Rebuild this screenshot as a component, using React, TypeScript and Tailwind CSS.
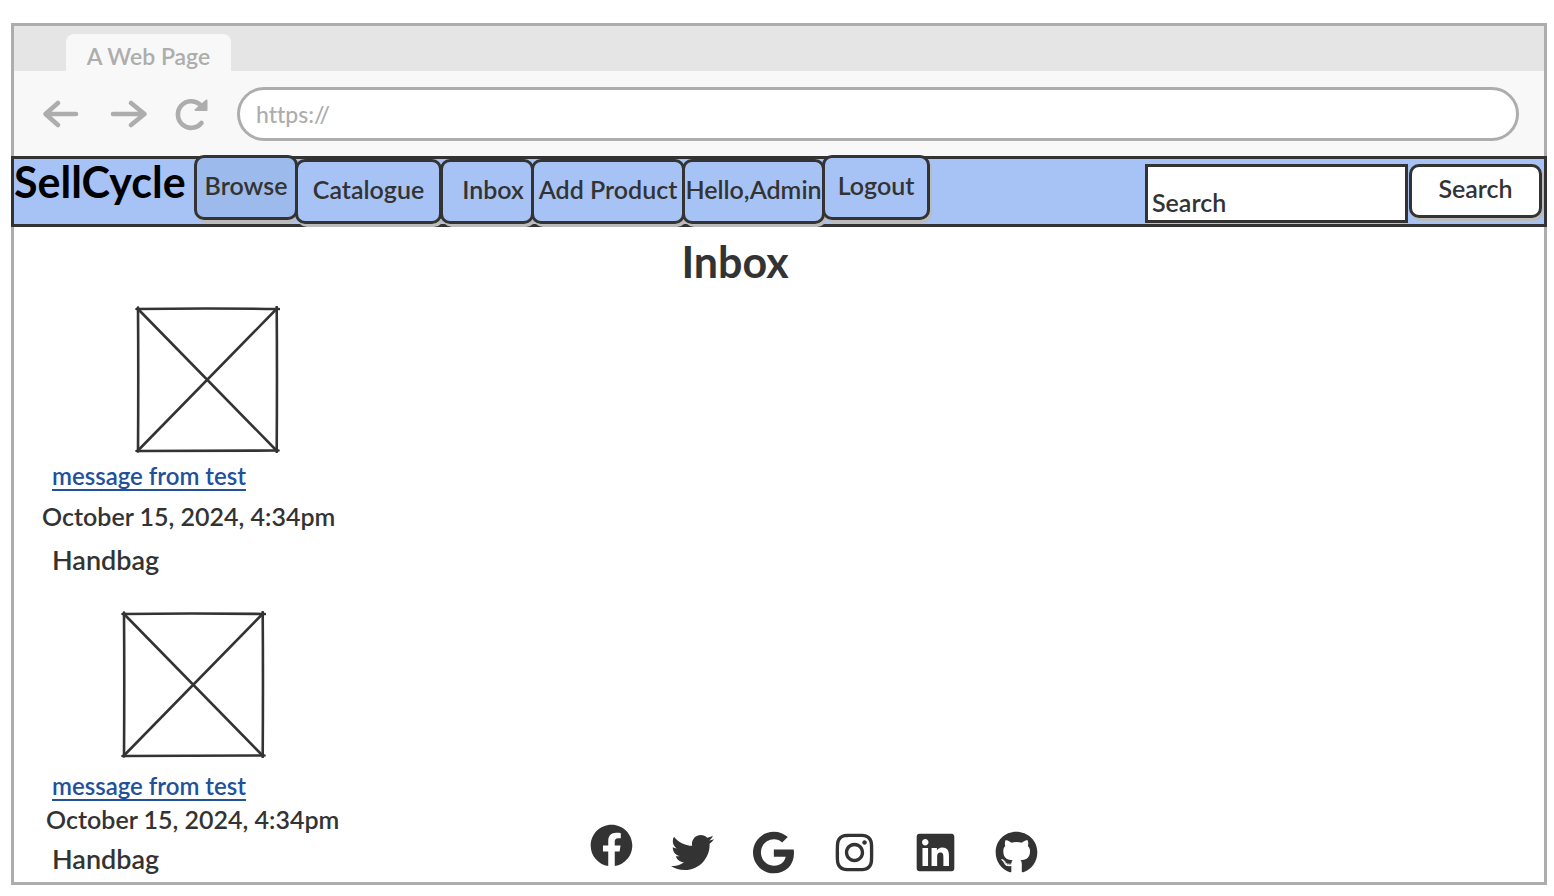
import React from "react";
import { FaFacebook, FaTwitter, FaGoogle, FaInstagram, FaLinkedin, FaGithub } from "react-icons/fa";

const navItems = [
  { label: "Browse", style: "w-[104px] -mt-1 bg-[#9dbaec]" },
  { label: "Catalogue", style: "w-[147px] -ml-[3px] bg-[#a7c3f5]" },
  { label: "Inbox", style: "w-[94px] -ml-[2px] pl-3 bg-[#a7c3f5]" },
  { label: "Add Product", style: "w-[154px] -ml-[3px] bg-[#a7c3f5]" },
  { label: "Hello,Admin", style: "w-[143px] -ml-[3px] bg-[#a7c3f5]" },
  { label: "Logout", style: "w-[108px] -ml-[3px] -mt-1 bg-[#a7c3f5]" },
];

const messages = [
  { image: "ml-[121px]", link: "mt-[7px]", date: "ml-7 mt-2", item: "mt-3" },
  { image: "ml-[107px]", link: "mt-3", date: "ml-8 mt-px", item: "mt-2" },
];

const socials = [
  { name: "Facebook", Icon: FaFacebook, style: "self-start" },
  { name: "Twitter", Icon: FaTwitter, style: "self-end" },
  { name: "Google", Icon: FaGoogle, style: "self-end" },
  { name: "Instagram", Icon: FaInstagram, style: "self-end" },
  { name: "LinkedIn", Icon: FaLinkedin, style: "self-end" },
  { name: "GitHub", Icon: FaGithub, style: "self-end" },
];

function ImagePlaceholder({ className }: { className: string }) {
  return (
    <svg
      className={className}
      width="145"
      height="147"
      viewBox="0 0 145 147"
      fill="none"
      stroke="#333"
      strokeWidth="2.6"
      strokeLinecap="round"
      aria-hidden="true"
    >
      <path d="M1.500 3 Q70 2 144 3" />
      <path d="M3 1.500 Q3.500 70 3 145.500" />
      <path d="M141.700 1 Q142.200 70 141.700 146" />
      <path d="M1.500 145 Q70 144.500 143.500 144.500" />
      <path d="M3 3 L141.500 144.500 M141.500 3 L3 144.500" />
    </svg>
  );
}

function BrowserChrome() {
  return (
    <header className="bg-[#f8f8f8] text-[23px] font-semibold text-[#adadad]">
      <div className="flex h-[45px] items-end bg-[#e5e5e5] pl-[52px]">
        <div className="flex h-[37px] w-[165px] items-center justify-center rounded-t-lg bg-[#f8f8f8] pt-2">
          A Web Page
        </div>
      </div>
      <div className="flex h-[85px] items-center pr-[25px] pl-7">
        <button type="button" aria-label="Back">
          <svg width="38" height="30" viewBox="0 0 38 30" fill="none" stroke="currentColor" strokeWidth="4.6" strokeLinecap="round" strokeLinejoin="round">
            <path d="M34 15 H4 M16 4 L3.500 15 L16 26" />
          </svg>
        </button>
        <button type="button" aria-label="Forward" className="ml-[30px]">
          <svg width="38" height="30" viewBox="0 0 38 30" fill="none" stroke="currentColor" strokeWidth="4.6" strokeLinecap="round" strokeLinejoin="round">
            <path d="M3 15 H34 M21 4 L34.500 15 L21 26" />
          </svg>
        </button>
        <button type="button" aria-label="Reload" className="ml-6">
          <svg width="38" height="34" viewBox="0 0 38 34" fill="none" stroke="currentColor" strokeWidth="4.6" strokeLinecap="round">
            <path d="M29.500 26 A13.300 13.300 0 1 1 28 7.500" />
            <path d="M34.500 3.500 V13 H23.500 Z" fill="currentColor" strokeWidth="2" strokeLinejoin="round" />
          </svg>
        </button>
        <input
          aria-label="Address"
          defaultValue="https://"
          className="ml-[27px] h-[54px] min-w-0 flex-1 rounded-full border-[3px] border-[#adadad] bg-white px-4 font-medium outline-none"
        />
      </div>
    </header>
  );
}

export default function App() {
  return (
    <div className="flex min-h-screen flex-col bg-white pt-[23px] pr-[7px] pb-[11px] pl-[11px] font-['Lato',sans-serif] text-[25px] font-semibold text-[#333] [font-variant-ligatures:none]">
      <div className="flex flex-1 flex-col border-[3px] border-[#adadad]">
        <BrowserChrome />

        <nav className="-mx-[3px] flex h-[71px] items-start border-[3px] border-[#333] bg-[#a7c3f5]">
          <a href="#home" className="w-[180px] shrink-0 text-[43px] leading-[46px] font-bold text-black">
            SellCycle
          </a>
          {navItems.map(({ label, style }) => (
            <button
              key={label}
              type="button"
              className={`flex h-[65px] shrink-0 items-center justify-center rounded-[10px] border-[3px] border-[#333] pb-1 whitespace-nowrap shadow-[2px_3px_0_#bbb] ${style}`}
            >
              {label}
            </button>
          ))}
          <form className="ml-auto flex items-start gap-px pt-[5px] pr-[2px]" onSubmit={(e) => e.preventDefault()}>
            <input
              aria-label="Search"
              placeholder="Search"
              className="h-[59px] w-[263px] border-[3px] border-[#333] bg-white px-1 pt-4 outline-none placeholder:text-[#333]"
            />
            <button
              type="submit"
              className="h-[54px] w-[133px] rounded-[10px] border-[3px] border-[#333] bg-white pb-1 shadow-[2px_3px_0_#bbb]"
            >
              Search
            </button>
          </form>
        </nav>

        <main className="flex flex-1 flex-col pt-[11px]">
          <h1 className="pr-[88px] text-center text-[43px] leading-[48px] font-bold">Inbox</h1>
          <div className="mt-5 flex flex-1">
            <ul className="flex w-[330px] flex-col gap-[35px] whitespace-nowrap">
              {messages.map((m, i) => (
                <li key={i} className="flex flex-col items-start leading-8">
                  <ImagePlaceholder className={m.image} />
                  <a
                    href="#message"
                    className={`ml-[38px] text-2xl leading-8 text-[#21519b] underline decoration-2 underline-offset-4 ${m.link}`}
                  >
                    message from test
                  </a>
                  <p className={m.date}>October 15, 2024, 4:34pm</p>
                  <p className={`ml-[38px] text-[27px] ${m.item}`}>Handbag</p>
                </li>
              ))}
            </ul>
            <footer className="mb-2 flex h-[50px] flex-1 justify-center gap-[38px] self-end pr-[261px]">
              {socials.map(({ name, Icon, style }) => (
                <a key={name} href={`#${name}`} aria-label={name} className={style}>
                  <Icon size={43} />
                </a>
              ))}
            </footer>
          </div>
        </main>
      </div>
    </div>
  );
}
